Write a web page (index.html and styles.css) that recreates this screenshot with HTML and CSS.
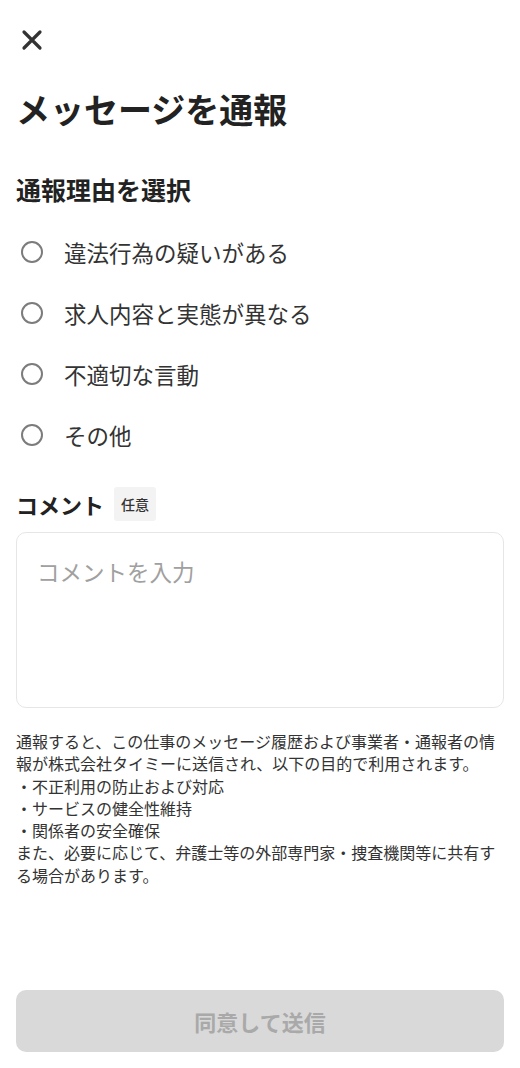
FILE: index.html
```html
<!DOCTYPE html>
<html lang="ja">
<head>
<meta charset="UTF-8">
<meta name="viewport" content="width=device-width, initial-scale=1.0">
<title>メッセージを通報</title>
<link rel="stylesheet" href="styles.css">
</head>
<body>
<div class="page">
  <div class="top">
    <button class="close-btn" aria-label="閉じる">
      <svg width="24" height="24" viewBox="0 0 24 24">
        <path d="M4 4 L20 20 M20 4 L4 20" stroke="#333" stroke-width="3.2" stroke-linecap="round" fill="none"/>
      </svg>
    </button>

    <h1 class="title">メッセージを通報</h1>

    <h2 class="section-title">通報理由を選択</h2>
    <div class="reasons">
      <label class="reason"><input type="radio" name="reason"><span class="radio"></span>違法行為の疑いがある</label>
      <label class="reason"><input type="radio" name="reason"><span class="radio"></span>求人内容と実態が異なる</label>
      <label class="reason"><input type="radio" name="reason"><span class="radio"></span>不適切な言動</label>
      <label class="reason"><input type="radio" name="reason"><span class="radio"></span>その他</label>
    </div>

    <div class="comment-head">
      <h2 class="section-title small">コメント</h2>
      <span class="badge">任意</span>
    </div>
    <textarea class="comment" placeholder="コメントを入力"></textarea>

    <p class="notice">通報すると、この仕事のメッセージ履歴および事業者・通報者の情報が株式会社タイミーに送信され、以下の目的で利用されます。<br>
    ・不正利用の防止および対応<br>
    ・サービスの健全性維持<br>
    ・関係者の安全確保<br>
    また、必要に応じて、弁護士等の外部専門家・捜査機関等に共有する場合があります。</p>
  </div>

  <div class="footer">
    <button class="submit" disabled>同意して送信</button>
  </div>
</div>
</body>
</html>
```

FILE: styles.css
```css
body, html {
  margin: 0;
  padding: 0;
  background: #fff;
  font-family: "Noto Sans CJK JP", "Noto Sans", sans-serif;
  color: #333;
}
.page {
  display: flex;
  flex-direction: column;
  min-height: 100vh;
  padding: 0 16px;
  box-sizing: border-box;
}
.close-btn {
  display: block;
  margin: 28px 0 0 4px;
  padding: 0;
  width: 24px;
  height: 24px;
  border: none;
  background: none;
}
.close-btn svg {
  display: block;
}
.title {
  margin: 34px 0 0;
  font-size: 34px;
  line-height: 46px;
  font-weight: 700;
  color: #222;
}
.section-title {
  margin: 0;
  font-size: 25px;
  line-height: 34px;
  font-weight: 700;
  color: #222;
}
.section-title.small {
  font-size: 22px;
}
.top > .section-title {
  margin-top: 40px;
}
.reasons {
  display: flex;
  flex-direction: column;
  margin-top: 15px;
}
.reason {
  display: flex;
  align-items: center;
  gap: 21px;
  height: 61px;
  font-size: 22.5px;
  color: #333;
}
.reason input {
  display: none;
}
.radio {
  width: 22px;
  height: 22px;
  margin-left: 5px;
  border: 2px solid #7c7c7c;
  border-radius: 50%;
  box-sizing: border-box;
}
.comment-head {
  display: flex;
  align-items: center;
  gap: 10px;
  margin-top: 22px;
}
.badge {
  background: #f3f3f3;
  font-size: 14px;
  line-height: 20px;
  padding: 7px 7px;
  border-radius: 3px;
  font-weight: 500;
  color: #333;
}
.comment {
  display: block;
  width: 100%;
  height: 176px;
  margin-top: 11px;
  padding: 22px 20px;
  box-sizing: border-box;
  border: 1px solid #e6e6e6;
  border-radius: 10px;
  font-family: inherit;
  font-size: 22.5px;
  resize: none;
}
.comment::placeholder {
  color: #a0a0a0;
}
.notice {
  margin: 22px 0 0;
  font-size: 16px;
  line-height: 22.3px;
  color: #333;
}
.footer {
  margin-top: auto;
  padding-bottom: 16px;
}
.submit {
  display: block;
  width: 100%;
  height: 62px;
  border: none;
  border-radius: 10px;
  background: #d9d9d9;
  color: #a9a9a9;
  font-family: inherit;
  font-size: 22px;
  font-weight: 700;
}
```
